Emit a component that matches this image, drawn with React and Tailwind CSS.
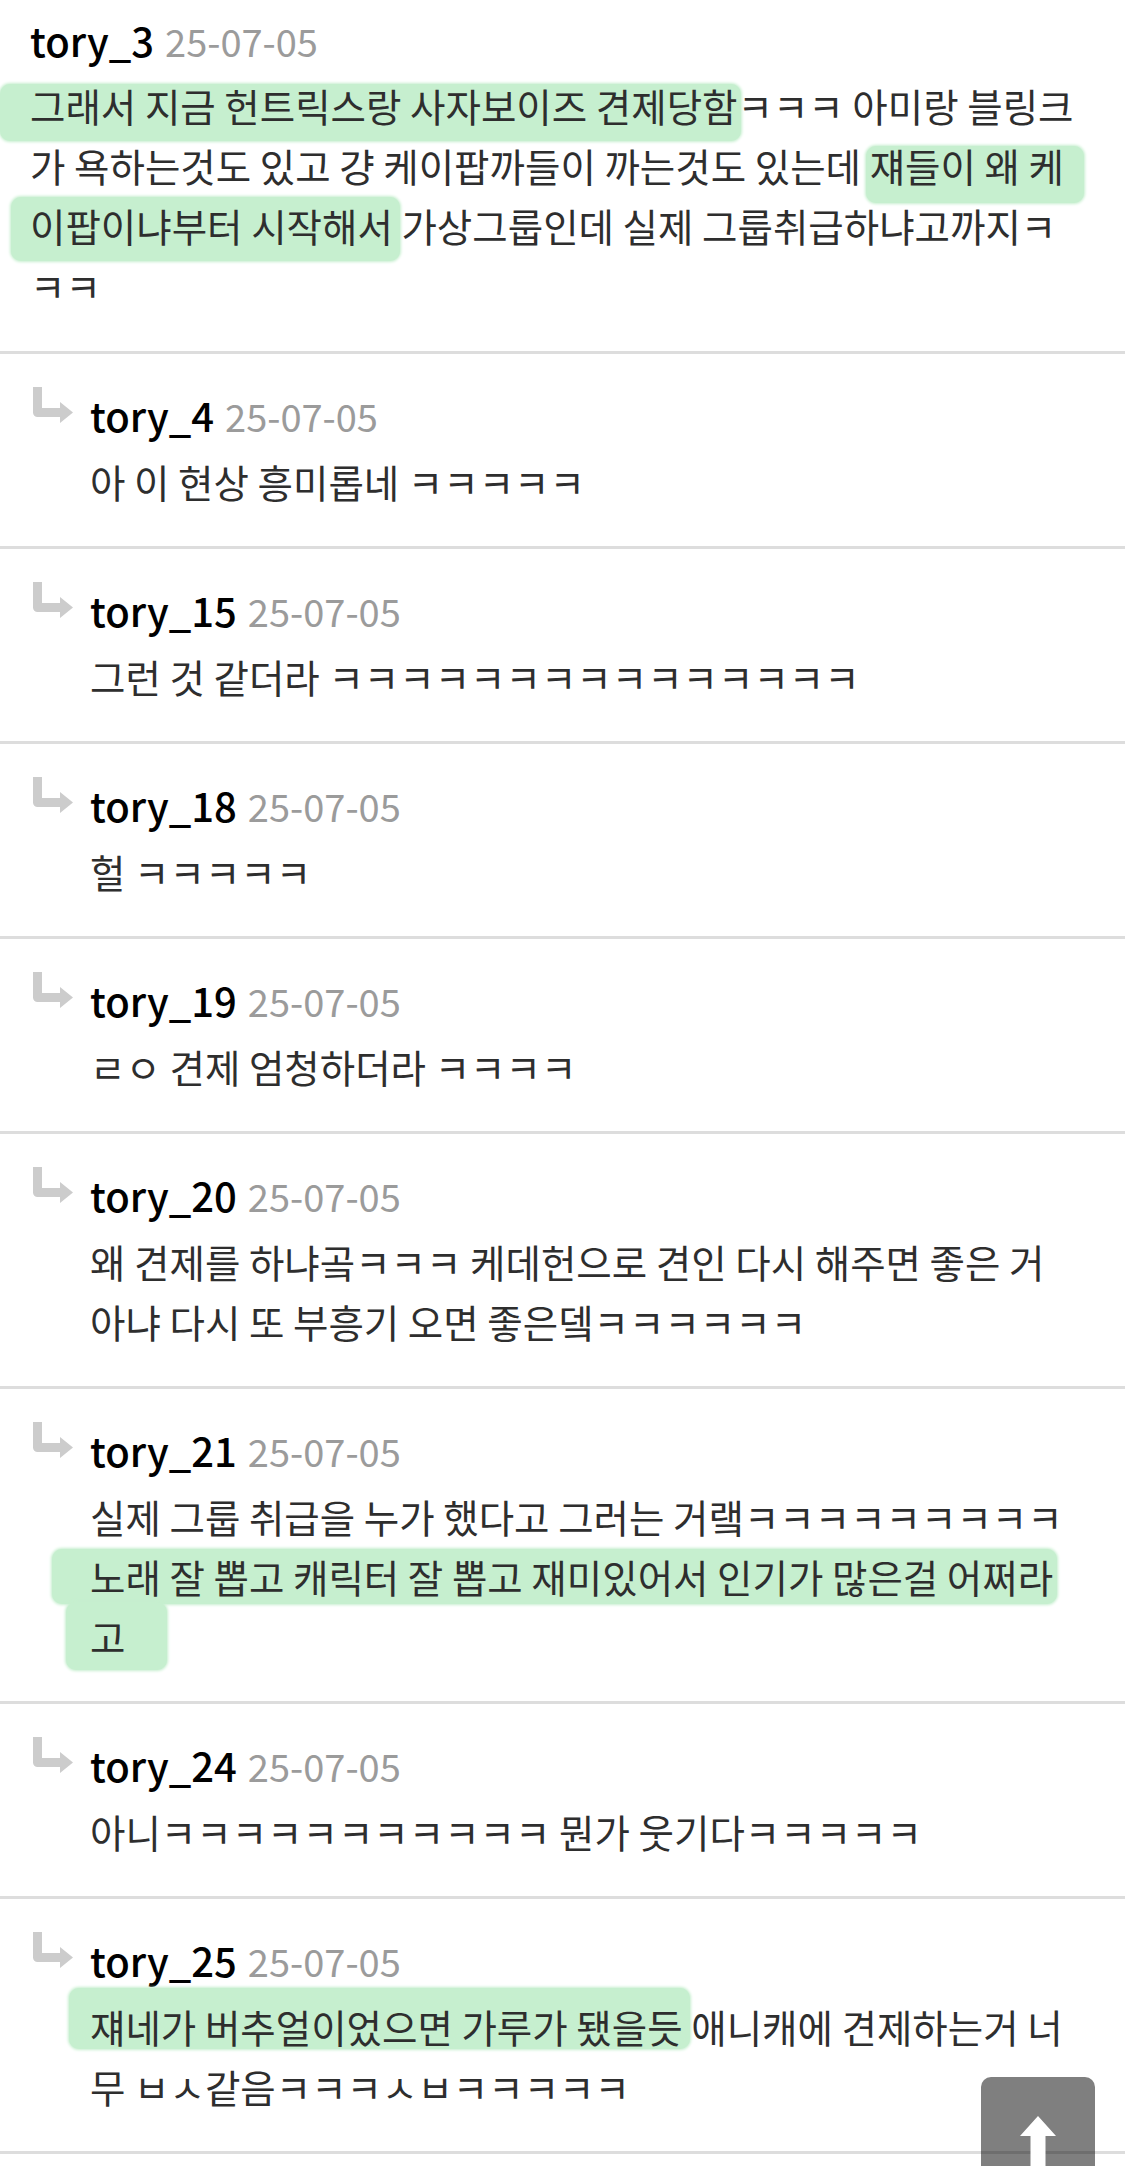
import React from 'react';

// marker highlight: inline-block sized to the glyph band, padding grows it, negative margin keeps line height
const MARK = 'inline-block leading-[36px] rounded-[10px] bg-[#c6efcf] shadow-[0_0_3px_1px_#c6efcf]';

function ReplyArrow() {
  return (
    <svg width="40" height="37" viewBox="0 0 40 37" className="shrink-0">
      <path d="M0 0h9v21h18v-6l13 10.5-13 10.5v-6H4.5a4.5 4.5 0 0 1-4.5-4.5z" fill="#cccccc" />
    </svg>
  );
}

function Header({ name, date }) {
  return (
    <div className="h-[56px] leading-[56px] whitespace-nowrap">
      <span className="text-[40px] font-medium text-[#000000]">{name}</span>
      <span className="ml-[11px] text-[38px] text-[#9b9b9b]">{date}</span>
    </div>
  );
}

function Lines({ children }) {
  return <div className="mt-[8px] text-[38.5px] leading-[60px] text-[#2e2e2e] whitespace-nowrap">{children}</div>;
}

function Reply({ name, date, children }) {
  return (
    <div className="flex border-b-[3px] border-[#dddddd] pt-[33px] pb-[35px] pl-[33px]">
      <ReplyArrow />
      <div className="ml-[17px] min-w-0">
        <Header name={name} date={date} />
        <Lines>{children}</Lines>
      </div>
    </div>
  );
}

export default function App() {
  return (
    <div className="relative min-h-[2166px] w-full bg-white font-['Noto_Sans_CJK_KR','Noto_Sans',sans-serif]">
      {/* original comment */}
      <div className="border-b-[3px] border-[#dddddd] pt-[12px] pb-[36px] pl-[30px]">
        <Header name="tory_3" date="25-07-05" />
        <div className="mt-[7px] text-[38.5px] leading-[60px] text-[#2e2e2e] whitespace-nowrap">
          <div>
            <span className={`${MARK} pt-[3px] -mt-[3px] pb-[18px] -mb-[18px] pl-[30px] -ml-[30px] pr-[4px] -mr-[4px]`}>그래서 지금 헌트릭스랑 사자보이즈 견제당함</span>ㅋㅋㅋ 아미랑 블링크
          </div>
          <div>
            가 욕하는것도 있고 걍 케이팝까들이 까는것도 있는데 <span className={`${MARK} pt-[1px] -mt-[1px] pb-[20px] -mb-[20px] pl-[4px] -ml-[4px] pr-[20px] -mr-[20px]`}>쟤들이 왜 케</span>
          </div>
          <div>
            <span className={`${MARK} pt-[10px] -mt-[10px] pb-[18px] -mb-[18px] pl-[19px] -ml-[19px] pr-[7px] -mr-[7px]`}>이팝이냐부터 시작해서</span> 가상그룹인데 실제 그룹취급하냐고까지ㅋ
          </div>
          <div>ㅋㅋ</div>
        </div>
      </div>

      <Reply name="tory_4" date="25-07-05">
        <div>아 이 현상 흥미롭네 ㅋㅋㅋㅋㅋ</div>
      </Reply>
      <Reply name="tory_15" date="25-07-05">
        <div>그런 것 같더라 ㅋㅋㅋㅋㅋㅋㅋㅋㅋㅋㅋㅋㅋㅋㅋ</div>
      </Reply>
      <Reply name="tory_18" date="25-07-05">
        <div>헐 ㅋㅋㅋㅋㅋ</div>
      </Reply>
      <Reply name="tory_19" date="25-07-05">
        <div>ㄹㅇ 견제 엄청하더라 ㅋㅋㅋㅋ</div>
      </Reply>
      <Reply name="tory_20" date="25-07-05">
        <div>왜 견제를 하냐곸ㅋㅋㅋ 케데헌으로 견인 다시 해주면 좋은 거</div>
        <div>아냐 다시 또 부흥기 오면 좋은뎈ㅋㅋㅋㅋㅋㅋ</div>
      </Reply>
      <Reply name="tory_21" date="25-07-05">
        <div>실제 그룹 취급을 누가 했다고 그러는 거랰ㅋㅋㅋㅋㅋㅋㅋㅋㅋ</div>
        <div>
          <span className={`${MARK} pt-[9px] -mt-[9px] pb-[10px] -mb-[10px] pl-[38px] -ml-[38px] pr-[4px] -mr-[4px]`}>노래 잘 뽑고 캐릭터 잘 뽑고 재미있어서 인기가 많은걸 어쩌라</span>
        </div>
        <div>
          <span className={`${MARK} pt-[16px] -mt-[16px] pb-[16px] -mb-[16px] pl-[24px] -ml-[24px] pr-[42px] -mr-[42px]`}>고</span>
        </div>
      </Reply>
      <Reply name="tory_24" date="25-07-05">
        <div>아니ㅋㅋㅋㅋㅋㅋㅋㅋㅋㅋㅋ 뭔가 웃기다ㅋㅋㅋㅋㅋ</div>
      </Reply>
      <Reply name="tory_25" date="25-07-05">
        <div>
          <span className={`${MARK} pt-[20px] -mt-[20px] pb-[5px] -mb-[5px] pl-[21px] -ml-[21px] pr-[7px] -mr-[7px]`}>쟤네가 버추얼이었으면 가루가 됐을듯</span> 애니캐에 견제하는거 너
        </div>
        <div>무 ㅂㅅ같음ㅋㅋㅋㅅㅂㅋㅋㅋㅋㅋ</div>
      </Reply>

      {/* scroll to top */}
      <button className="fixed bottom-0 right-[30px] flex h-[89px] w-[114px] justify-center rounded-t-[10px] bg-black/50 pt-[39px]">
        <svg width="36" height="50" viewBox="0 0 36 50">
          <polygon points="18,0 36,20 25.5,20 25.5,50 10.5,50 10.5,20 0,20" fill="#ffffff" />
        </svg>
      </button>
    </div>
  );
}
